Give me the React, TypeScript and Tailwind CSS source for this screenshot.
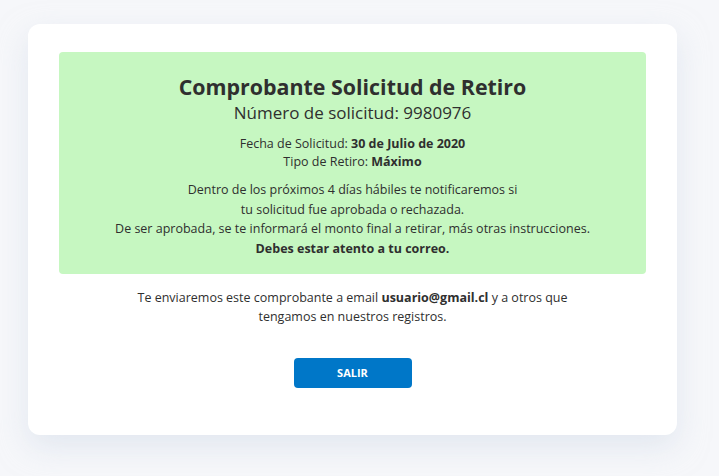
import React from "react";

export default function App() {
  return (
    <div
      className="min-h-[476px] w-full bg-[#f6f7fa] pt-[24px] pl-[28px]"
      style={{ fontFamily: '"Open Sans", "Noto Sans", sans-serif' }}
    >
      <div className="w-[649px] h-[411px] rounded-[12px] bg-white shadow-[0_12px_30px_rgba(210,218,232,0.55)] px-[31px] pt-[28px] text-[#2f2f2f]">
        <div className="rounded-[4px] bg-[#c6f7c1] h-[222px] flex flex-col items-center pt-[20px] text-center">
          <h1 className="text-[21.4px] font-bold leading-[29px]">Comprobante Solicitud de Retiro</h1>
          <h2 className="text-[17px] font-medium leading-[24px]">Número de solicitud: 9980976</h2>
          <div className="mt-[10px] text-[12.5px] leading-[18px]">
            <p>
              Fecha de Solicitud: <span className="font-bold">30 de Julio de 2020</span>
            </p>
            <p>
              Tipo de Retiro: <span className="font-bold">Máximo</span>
            </p>
          </div>
          <div className="mt-[9px] text-[12.5px] leading-[19.5px]">
            <p>Dentro de los próximos 4 días hábiles te notificaremos si</p>
            <p>tu solicitud fue aprobada o rechazada.</p>
            <p>De ser aprobada, se te informará el monto final a retirar, más otras instrucciones.</p>
            <p className="font-bold">Debes estar atento a tu correo.</p>
          </div>
        </div>
        <div className="mt-[14px] text-center text-[12.5px] leading-[19px] px-[70px]">
          Te enviaremos este comprobante a email <span className="font-bold">usuario@gmail.cl</span> y a otros que
          tengamos en nuestros registros.
        </div>
        <div className="flex justify-center mt-[32px]">
          <button className="w-[118px] h-[30px] rounded-[4px] bg-[#0077c8] text-white text-[11px] font-bold">
            SALIR
          </button>
        </div>
      </div>
    </div>
  );
}
